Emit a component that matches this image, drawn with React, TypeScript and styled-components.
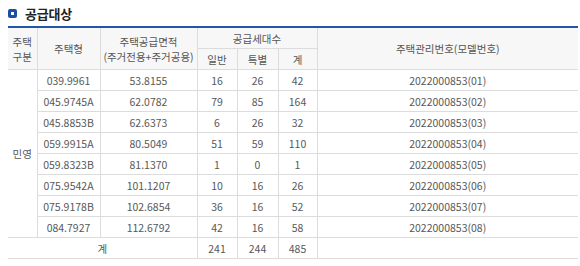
import React from "react";
import styled, { createGlobalStyle } from "styled-components";

const GlobalStyle = createGlobalStyle`
  html, body {
    margin: 0;
    padding: 0;
    background: #fff;
  }
  body {
    font-family: "Noto Sans CJK KR", "Noto Sans", sans-serif;
  }
`;

const Wrap = styled.section`
  width: 570px;
  padding: 0 2px 0 8px;
`;

const TitleBar = styled.h3`
  display: flex;
  align-items: center;
  gap: 8px;
  height: 26px;
  margin: 0;
  font-size: 13px;
  font-weight: 700;
  color: #222;
  letter-spacing: -0.2px;
`;

const TitleIcon = styled.span`
  width: 9px;
  height: 9px;
  box-sizing: border-box;
  border: 3px solid #1b4fa6;
  border-radius: 2px;
  background: #fff;
`;

const Table = styled.table`
  width: 570px;
  border-collapse: collapse;
  table-layout: fixed;
  border-top: 2px solid #2356a8;
  font-size: 10.5px;
  color: #585858;
  text-align: center;
`;

const Th = styled.th`
  height: 20px;
  padding: 0;
  font-weight: 400;
  line-height: 15px;
  background: #f7f7f7;
  border: 1px solid #dcdcdc;
  color: #555;
  &:first-child {
    border-left: none;
  }
  &:last-child {
    border-right: none;
  }
`;

const Td = styled.td<{ $edge?: boolean }>`
  height: 20px;
  padding: 0;
  border: 1px solid #dcdcdc;
  border-left: ${(p) => (p.$edge ? "none" : "1px solid #dcdcdc")};
  &:last-child {
    border-right: none;
  }
`;

const rows = [
  ["039.9961", "53.8155", 16, 26, 42, "01"],
  ["045.9745A", "62.0782", 79, 85, 164, "02"],
  ["045.8853B", "62.6373", 6, 26, 32, "03"],
  ["059.9915A", "80.5049", 51, 59, 110, "04"],
  ["059.8323B", "81.1370", 1, 0, 1, "05"],
  ["075.9542A", "101.1207", 10, 16, 26, "06"],
  ["075.9178B", "102.6854", 36, 16, 52, "07"],
  ["084.7927", "112.6792", 42, 16, 58, "08"],
];

export default function App() {
  return (
    <Wrap>
      <GlobalStyle />
      <TitleBar>
        <TitleIcon />
        공급대상
      </TitleBar>
      <Table>
        <colgroup>
          <col style={{ width: 29 }} />
          <col style={{ width: 63 }} />
          <col style={{ width: 97 }} />
          <col style={{ width: 40 }} />
          <col style={{ width: 41 }} />
          <col style={{ width: 39 }} />
          <col />
        </colgroup>
        <thead>
          <tr>
            <Th rowSpan={2}>
              주택
              <br />
              구분
            </Th>
            <Th rowSpan={2}>주택형</Th>
            <Th rowSpan={2}>
              주택공급면적
              <br />
              (주거전용+주거공용)
            </Th>
            <Th colSpan={3}>공급세대수</Th>
            <Th rowSpan={2}>주택관리번호(모델번호)</Th>
          </tr>
          <tr>
            <Th>일반</Th>
            <Th>특별</Th>
            <Th>계</Th>
          </tr>
        </thead>
        <tbody>
          {rows.map((r, i) => (
            <tr key={r[5]}>
              {i === 0 && (
                <Td $edge rowSpan={rows.length}>
                  민영
                </Td>
              )}
              <Td>{r[0]}</Td>
              <Td>{r[1]}</Td>
              <Td>{r[2]}</Td>
              <Td>{r[3]}</Td>
              <Td>{r[4]}</Td>
              <Td>2022000853({r[5]})</Td>
            </tr>
          ))}
          <tr>
            <Td $edge colSpan={3}>
              계
            </Td>
            <Td>241</Td>
            <Td>244</Td>
            <Td>485</Td>
            <Td />
          </tr>
        </tbody>
      </Table>
    </Wrap>
  );
}
